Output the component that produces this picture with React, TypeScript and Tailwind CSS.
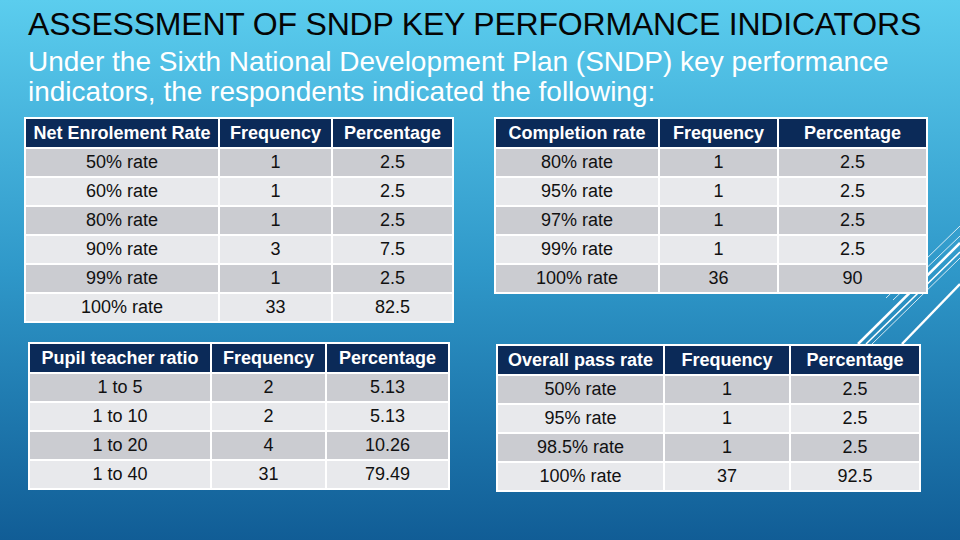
import React from 'react';

type TableProps = {
  cols: string;
  head: string[];
  rows: string[][];
  className?: string;
};

function KpiTable({ cols, head, rows, className }: TableProps) {
  return (
    <div className={`grid gap-[2px] bg-white p-[2px] ${cols} ${className ?? ''}`}>
      {head.map((h) => (
        <div key={h} className="flex h-[28px] items-center justify-center bg-[#0b2a58] text-[18px] font-bold text-white">
          {h}
        </div>
      ))}
      {rows.map((r, i) =>
        r.map((c, j) => (
          <div
            key={`${i}-${j}`}
            className={`flex h-[27px] items-center justify-center text-[18px] text-[#111] ${
              i % 2 === 0 ? 'bg-[#cbccd1]' : 'bg-[#e8e9ec]'
            }`}
          >
            {c}
          </div>
        ))
      )}
    </div>
  );
}

export default function App() {
  return (
    <div
      className="relative h-[540px] w-[960px] overflow-hidden bg-gradient-to-b from-[#5bcdee] via-[#2f98c9] to-[#115d96]"
      style={{ fontFamily: '"Liberation Sans", Arial, sans-serif' }}
    >
      {/* decorative lines */}
      <svg className="absolute inset-0" width="960" height="540">
        <g stroke="white" fill="none">
          <line x1="886" y1="298" x2="960" y2="226" strokeWidth="0.8" />
          <line x1="893" y1="300" x2="960" y2="236" strokeWidth="0.8" />
          <line x1="858" y1="344" x2="960" y2="243" strokeWidth="2.5" />
          <line x1="866" y1="344" x2="960" y2="252" strokeWidth="1.5" />
          <line x1="872" y1="344" x2="960" y2="258" strokeWidth="0.8" />
          <line x1="902" y1="344" x2="960" y2="284" strokeWidth="2.5" />
        </g>
      </svg>

      <div className="relative px-[28px] pt-[8px]">
        <h1 className="whitespace-nowrap text-[32px] leading-[32px] font-normal tracking-[-0.2px] text-[#050505]">
          ASSESSMENT OF SNDP KEY PERFORMANCE INDICATORS
        </h1>
        <p className="mt-[7px] text-[28px] leading-[30px] text-white">
          Under the Sixth National Development Plan (SNDP) key performance indicators, the respondents indicated the following:
        </p>
      </div>

      <div className="relative mt-[10px] grid grid-cols-[470px_466px] pl-[24px]">
        <KpiTable
          cols="grid-cols-[192px_111px_119px] w-max"
          head={['Net Enrolement Rate', 'Frequency', 'Percentage']}
          rows={[
            ['50% rate', '1', '2.5'],
            ['60% rate', '1', '2.5'],
            ['80% rate', '1', '2.5'],
            ['90% rate', '3', '7.5'],
            ['99% rate', '1', '2.5'],
            ['100% rate', '33', '82.5'],
          ]}
          className="self-start"
        />
        <KpiTable
          cols="grid-cols-[162px_117px_147px] w-max"
          head={['Completion rate', 'Frequency', 'Percentage']}
          rows={[
            ['80% rate', '1', '2.5'],
            ['95% rate', '1', '2.5'],
            ['97% rate', '1', '2.5'],
            ['99% rate', '1', '2.5'],
            ['100% rate', '36', '90'],
          ]}
          className="self-start"
        />
        <KpiTable
          cols="grid-cols-[180px_113px_121px] w-max"
          head={['Pupil teacher ratio', 'Frequency', 'Percentage']}
          rows={[
            ['1 to 5', '2', '5.13'],
            ['1 to 10', '2', '5.13'],
            ['1 to 20', '4', '10.26'],
            ['1 to 40', '31', '79.49'],
          ]}
          className="mt-[19px] ml-[4px] self-start"
        />
        <KpiTable
          cols="grid-cols-[165px_124px_128px] w-max"
          head={['Overall pass rate', 'Frequency', 'Percentage']}
          rows={[
            ['50% rate', '1', '2.5'],
            ['95% rate', '1', '2.5'],
            ['98.5% rate', '1', '2.5'],
            ['100% rate', '37', '92.5'],
          ]}
          className="mt-[21px] ml-[2px] self-start"
        />
      </div>
    </div>
  );
}
